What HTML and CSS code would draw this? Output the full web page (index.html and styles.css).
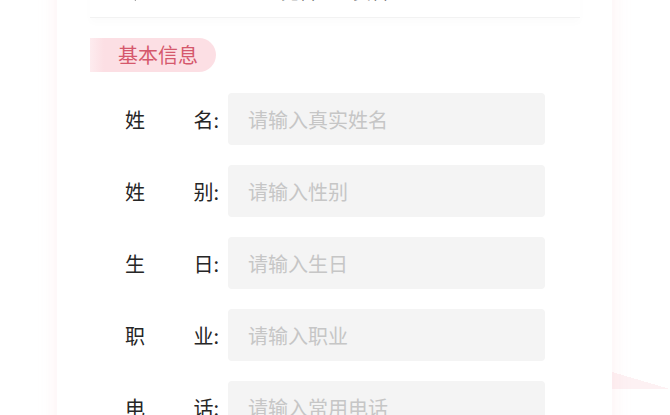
FILE: index.html
```html
<!DOCTYPE html>
<html lang="zh-CN">
<head>
    <meta charset="utf-8">
    <title>基本信息</title>
    <link rel="stylesheet" href="styles.css">
</head>
<body>
    <div class="page">
        <div class="card">
            <!-- Header (scrolled mostly out of view) -->
            <div class="header">
                <svg class="back" viewBox="0 0 12 20" width="12" height="20">
                    <path d="M10 2 L2 10 L10 18" fill="none" stroke="#333" stroke-width="2"/>
                </svg>
                <span class="title">完善个人资料</span>
            </div>

            <div class="badge">基本信息</div>

            <div class="form">
                <div class="row">
                    <label class="label"><span>姓</span><span>名:</span></label>
                    <input class="field" type="text" placeholder="请输入真实姓名">
                </div>
                <div class="row">
                    <label class="label"><span>姓</span><span>别:</span></label>
                    <input class="field" type="text" placeholder="请输入性别">
                </div>
                <div class="row">
                    <label class="label"><span>生</span><span>日:</span></label>
                    <input class="field" type="text" placeholder="请输入生日">
                </div>
                <div class="row">
                    <label class="label"><span>职</span><span>业:</span></label>
                    <input class="field" type="text" placeholder="请输入职业">
                </div>
                <div class="row">
                    <label class="label"><span>电</span><span>话:</span></label>
                    <input class="field" type="text" placeholder="请输入常用电话">
                </div>
            </div>
        </div>
    </div>
</body>
</html>
```

FILE: styles.css
```css
:root {
    --text-color: #262626;
    --hint-color: #c6c6c6;
    --field-bg: #f4f4f4;
    --badge-bg: #fcdfe4;
    --badge-text: #d5586c;
    --line-color: #f2f2f2;
}

body {
    margin: 0;
    background: #ffffff;
    font-family: "Noto Sans CJK SC", "Noto Sans", sans-serif;
    color: var(--text-color);
    overflow: hidden;
    height: 415px;
}

.page {
    height: 415px;
    padding: 0 58px 0 57px;
    background: linear-gradient(to bottom left, transparent 50%, #fdf1f3 50%) no-repeat right bottom / 58px 17px;
}

.card {
    width: 555px;
    height: 480px;
    margin-top: -26px;
    padding: 0 32px 0 33px;
    box-sizing: border-box;
    background: #ffffff;
    box-shadow: 0 0 16px 2px rgba(246, 186, 192, 0.18);
}

.header {
    height: 44px;
    box-sizing: border-box;
    padding-bottom: 9px;
    display: flex;
    align-items: center;
    justify-content: center;
    position: relative;
    border-bottom: 1px solid var(--line-color);
    box-shadow: 0 5px 8px rgba(0, 0, 0, 0.015);
}

.back {
    position: absolute;
    left: 36px;
    top: 8px;
}

.title {
    font-size: 18px;
    line-height: 35px;
    color: #555555;
}

.badge {
    display: inline-block;
    margin-top: 20px;
    height: 34px;
    line-height: 34px;
    padding: 0 18px 0 28px;
    font-size: 20px;
    color: var(--badge-text);
    background: linear-gradient(to right, rgba(252, 223, 228, 0.6), var(--badge-bg) 14px);
    border-radius: 0 17px 17px 0;
}

.form {
    margin-top: 21px;
    display: flex;
    flex-direction: column;
    gap: 20px;
}

.row {
    display: flex;
    align-items: center;
    padding-left: 35px;
}

.label {
    width: 94px;
    margin-right: 9px;
    display: flex;
    justify-content: space-between;
    font-size: 20px;
    color: var(--text-color);
}

.field {
    width: 317px;
    height: 52px;
    box-sizing: border-box;
    padding: 0 20px;
    border: none;
    border-radius: 4px;
    background: var(--field-bg);
    font-family: inherit;
    font-size: 20px;
    color: var(--text-color);
    outline: none;
}

.field::placeholder {
    color: var(--hint-color);
}
```
